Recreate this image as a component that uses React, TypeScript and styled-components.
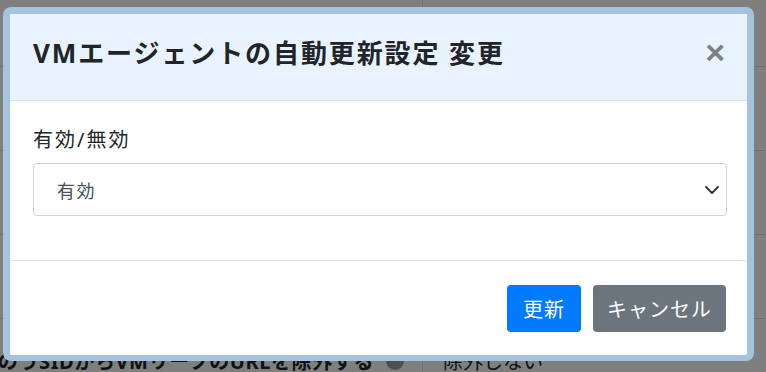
import React from 'react'
import styled, { createGlobalStyle } from 'styled-components'

const GlobalStyle = createGlobalStyle`
  html, body {
    margin: 0;
    padding: 0;
    width: 766px;
    height: 372px;
    overflow: hidden;
    background: #ffffff;
    font-family: "Noto Sans", "Noto Sans CJK JP", sans-serif;
  }
`

const Page = styled.div`
  position: relative;
  width: 766px;
  height: 372px;
  overflow: hidden;
`

const Table = styled.div`
  display: grid;
  grid-template-columns: 423px 1fr;
  grid-auto-rows: 84px;
  margin-top: -17px;
`

const Cell = styled.div<{ $left?: boolean }>`
  display: flex;
  align-items: center;
  justify-content: ${p => (p.$left ? 'flex-end' : 'flex-start')};
  gap: 12px;
  padding: ${p => (p.$left ? '0 18px 0 0' : '0 0 0 20px')};
  border-bottom: 1px solid #dee2e6;
  border-right: ${p => (p.$left ? '1px solid #dee2e6' : 'none')};
  white-space: nowrap;
  overflow: hidden;
  font-size: 20px;
  font-weight: ${p => (p.$left ? 700 : 400)};
  letter-spacing: ${p => (p.$left ? '0.6px' : '0')};
  color: #212529;
`

const InfoDot = styled.span`
  flex: none;
  width: 18px;
  height: 18px;
  border-radius: 50%;
  background: #9aa0a6;
`

const Backdrop = styled.div`
  position: absolute;
  inset: 0;
  background: rgba(0, 0, 0, 0.5);
`

const Modal = styled.div`
  position: absolute;
  left: 3px;
  top: 7px;
  width: 751px;
  height: 354px;
  box-sizing: border-box;
  border: 7px solid #a6c2dc;
  border-bottom-width: 6px;
  border-radius: 8px;
  background: #ffffff;
  display: flex;
  flex-direction: column;
  overflow: hidden;
`

const Header = styled.div`
  height: 87px;
  flex: none;
  display: flex;
  align-items: center;
  justify-content: space-between;
  padding: 0 22px 10px 23px;
  box-sizing: border-box;
  background: #e8f3fe;
  border-bottom: 1px solid #dee2e6;
`

const Title = styled.h5`
  margin: 0;
  font-size: 26px;
  font-weight: 700;
  letter-spacing: 1.9px;
  color: #212529;
`

const Close = styled.button`
  border: none;
  background: none;
  padding: 0;
  color: #212529;
  opacity: 0.55;
  font-family: "Liberation Sans", sans-serif;
  font-size: 34px;
  font-weight: 700;
  line-height: 1;
`

const Body = styled.div`
  height: 160px;
  flex: none;
  box-sizing: border-box;
  padding: 24px 20px 0 23px;
  border-bottom: 1px solid #dee2e6;
`

const Label = styled.label`
  display: block;
  height: 30px;
  line-height: 30px;
  margin-bottom: 8px;
  font-size: 20px;
  letter-spacing: 2px;
  color: #212529;
`

const Select = styled.div`
  height: 53px;
  box-sizing: border-box;
  display: flex;
  align-items: center;
  justify-content: space-between;
  padding: 0 6px 0 23px;
  border: 1px solid #ced4da;
  border-radius: 4px;
  font-size: 18px;
  letter-spacing: 1.5px;
  color: #495057;
`

const Footer = styled.div`
  flex: 1;
  display: flex;
  align-items: center;
  justify-content: flex-end;
  gap: 12px;
  padding: 0 21px 0 0;
`

const Button = styled.button<{ $variant: 'primary' | 'secondary' }>`
  height: 47px;
  padding: 0 ${p => (p.$variant === 'primary' ? '16px' : '14px')};
  border: none;
  border-radius: 4px;
  background: ${p => (p.$variant === 'primary' ? '#007bff' : '#6c757d')};
  color: #ffffff;
  font-family: inherit;
  font-size: 20px;
  letter-spacing: 1px;
`

const Chevron = () => (
  <svg width="16" height="16" viewBox="0 0 16 16">
    <path d="M2 5l6 6 6-6" fill="none" stroke="#343a40" strokeWidth="2" strokeLinecap="round" strokeLinejoin="round" />
  </svg>
)

const rows = [
  ['', ''],
  ['自動更新設定くく', '有効'],
  ['', ''],
  ['', ''],
  ['VMのうSIDからVMリーフのURLを除外する', '除外しない'],
]

export default function App() {
  return (
    <Page>
      <GlobalStyle />
      <Table>
        {rows.map(([l, r], i) => (
          <React.Fragment key={i}>
            <Cell $left>
              {l}
              {i === 4 && <InfoDot />}
            </Cell>
            <Cell>{r}</Cell>
          </React.Fragment>
        ))}
      </Table>
      <Backdrop />
      <Modal>
        <Header>
          <Title>VMエージェントの自動更新設定 変更</Title>
          <Close>×</Close>
        </Header>
        <Body>
          <Label>有効/無効</Label>
          <Select>
            <span>有効</span>
            <Chevron />
          </Select>
        </Body>
        <Footer>
          <Button $variant="primary">更新</Button>
          <Button $variant="secondary">キャンセル</Button>
        </Footer>
      </Modal>
    </Page>
  )
}
